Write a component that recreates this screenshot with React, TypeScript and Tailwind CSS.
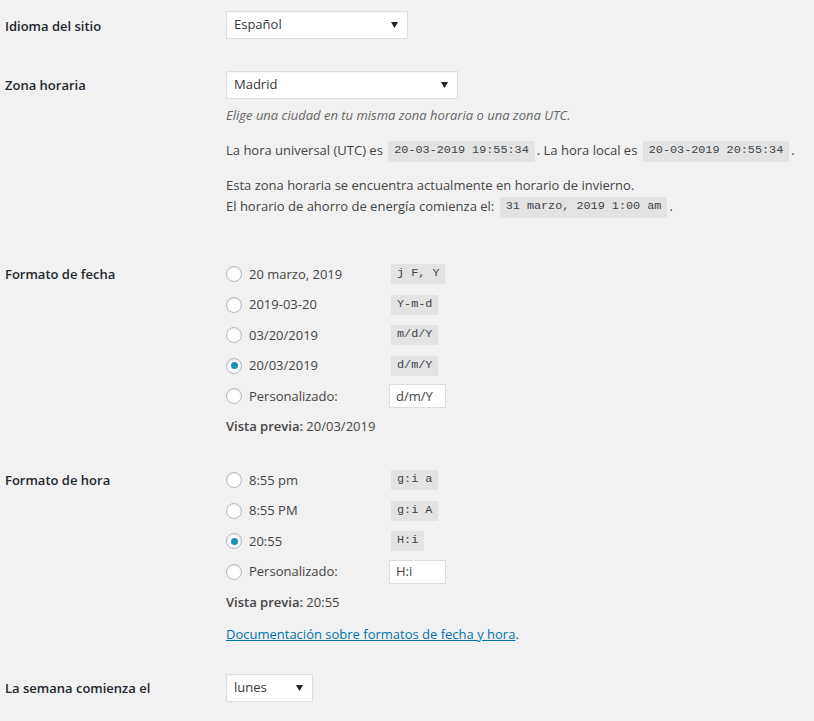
import React from "react";

const sans = "font-['Open_Sans',sans-serif]";
const mono = "font-['Liberation_Mono',monospace]";

function Select({ value, width }: { value: string; width: string }) {
  return (
    <div
      className={`${width} h-[28px] bg-white border border-[#dddddd] shadow-[inset_0_1px_2px_rgba(0,0,0,0.04)] flex items-center justify-between pl-[7px] pr-[7px] text-[13px] text-[#32373c]`}
    >
      <span>{value}</span>
      <svg width="7" height="6" viewBox="0 0 7 6" className="mr-[2px]">
        <path d="M0 0 L7 0 L3.5 6 Z" fill="#222" />
      </svg>
    </div>
  );
}

function Code({ children, h = "h-[21px]" }: { children: React.ReactNode; h?: string }) {
  return (
    <span
      className={`${mono} inline-flex items-center ${h} px-[6px] mx-[2px] bg-[#e3e3e3] text-[11.8px] text-[#3c434a]`}
    >
      {children}
    </span>
  );
}

function Radio({ checked }: { checked?: boolean }) {
  return (
    <span className="w-[16px] h-[16px] rounded-full bg-white border border-[#b4b9be] shadow-[inset_0_1px_2px_rgba(0,0,0,0.1)] flex items-center justify-center shrink-0">
      {checked && <span className="w-[7px] h-[7px] rounded-full bg-[#1e8cbe]" />}
    </span>
  );
}

function Option({
  label,
  code,
  checked,
  custom,
}: {
  label: string;
  code: string;
  checked?: boolean;
  custom?: boolean;
}) {
  return (
    <div className="h-[30.5px] flex items-center">
      <Radio checked={checked} />
      <span className="ml-[7px] w-[140px]">{label}</span>
      {custom ? (
        <span className="w-[57px] h-[24px] bg-white border border-[#dddddd] flex items-center pl-[6px] text-[13px]">
          {code}
        </span>
      ) : (
        <Code h="h-[20px]">{code}</Code>
      )}
    </div>
  );
}

function Label({ children }: { children: React.ReactNode }) {
  return (
    <div className="w-[221px] shrink-0 font-semibold text-[13px] text-[#23282d]">
      {children}
    </div>
  );
}

export default function App() {
  return (
    <div
      className={`${sans} min-h-[721px] w-full bg-[#f1f1f1] text-[#444] text-[13px] pl-[5px] pt-[11px]`}
    >
      {/* Idioma */}
      <div className="flex items-start">
        <Label>
          <div className="h-[28px] leading-[31px]">Idioma del sitio</div>
        </Label>
        <Select value="Español" width="w-[182px]" />
      </div>

      {/* Zona horaria */}
      <div className="flex mt-[32px]">
        <Label>
          <div className="h-[28px] leading-[29px]">Zona horaria</div>
        </Label>
        <div>
          <Select value="Madrid" width="w-[232px]" />
          <div className="mt-[6px] leading-[20px] italic text-[#666]">
            Elige una ciudad en tu misma zona horaria o una zona UTC.
          </div>
          <div className="mt-[15px] h-[22px] flex items-center whitespace-pre">
            <span>La hora universal (UTC) es </span>
            <Code>20-03-2019 19:55:34</Code>
            <span>. La hora local es </span>
            <Code>20-03-2019 20:55:34</Code>
            <span>.</span>
          </div>
          <div className="mt-[12px] leading-[22px]">
            Esta zona horaria se encuentra actualmente en horario de invierno.
          </div>
          <div className="h-[22px] flex items-center whitespace-pre">
            <span>El horario de ahorro de energía comienza el: </span>
            <Code>31 marzo, 2019 1:00 am</Code>
            <span>.</span>
          </div>
        </div>
      </div>

      {/* Formato de fecha */}
      <div className="flex mt-[41px]">
        <Label>
          <div className="h-[30.5px] leading-[31.5px]">Formato de fecha</div>
        </Label>
        <div>
          <Option label="20 marzo, 2019" code="j F, Y" />
          <Option label="2019-03-20" code="Y-m-d" />
          <Option label="03/20/2019" code="m/d/Y" />
          <Option label="20/03/2019" code="d/m/Y" checked />
          <Option label="Personalizado:" code="d/m/Y" custom />
          <div className="h-[30.5px] flex items-center">
            <span className="font-semibold">Vista previa:</span>
            <span>&nbsp;20/03/2019</span>
          </div>
        </div>
      </div>

      {/* Formato de hora */}
      <div className="flex mt-[23px]">
        <Label>
          <div className="h-[30.5px] leading-[31.5px]">Formato de hora</div>
        </Label>
        <div>
          <Option label="8:55 pm" code="g:i a" />
          <Option label="8:55 PM" code="g:i A" />
          <Option label="20:55" code="H:i" checked />
          <Option label="Personalizado:" code="H:i" custom />
          <div className="h-[30.5px] flex items-center">
            <span className="font-semibold">Vista previa:</span>
            <span>&nbsp;20:55</span>
          </div>
          <div className="mt-[6px] leading-[20px]">
            <a className="text-[#0073aa] underline" href="#">
              Documentación sobre formatos de fecha y hora
            </a>
            .
          </div>
        </div>
      </div>

      {/* Semana */}
      <div className="flex items-start mt-[30px]">
        <Label>
          <div className="h-[28px] leading-[29px]">La semana comienza el</div>
        </Label>
        <Select value="lunes" width="w-[87px]" />
      </div>
    </div>
  );
}
